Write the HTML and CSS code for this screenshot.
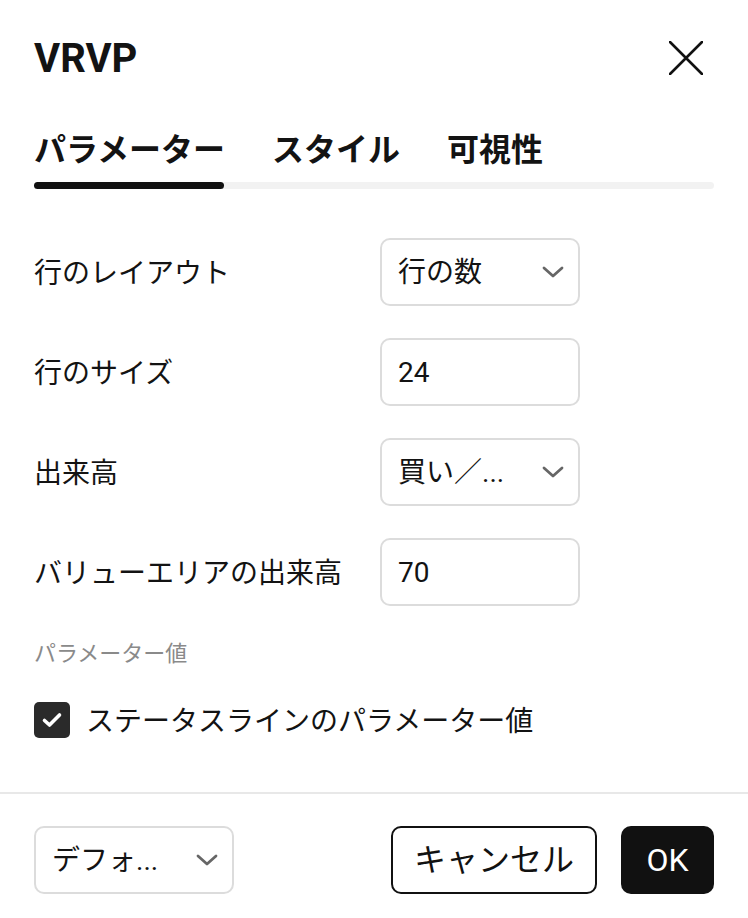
FILE: index.html
```html
<!DOCTYPE html>
<html lang="ja">
<head>
<meta charset="utf-8">
<link rel="stylesheet" href="styles.css">
</head>
<body>
<div class="dialog">
  <div class="header">
    <div class="title">VRVP</div>
    <svg class="close" width="34" height="34" viewBox="0 0 34 34"><path d="M1 1L33 33M33 1L1 33" stroke="#111" stroke-width="2.6" stroke-linecap="round" fill="none"/></svg>
  </div>
  <div class="tabs">
    <div class="tab">パラメーター</div>
    <div class="tab">スタイル</div>
    <div class="tab">可視性</div>
  </div>
  <div class="track"><div class="thumb"></div></div>

  <div class="form">
    <div class="row">
      <div class="label">行のレイアウト</div>
      <div class="field select"><span class="value">行の数</span><svg class="chev" width="22" height="12" viewBox="0 0 22 12"><path d="M2 2L11 10L20 2" stroke="#666" stroke-width="2.8" fill="none" stroke-linecap="round" stroke-linejoin="round"/></svg></div>
    </div>
    <div class="row">
      <div class="label">行のサイズ</div>
      <div class="field"><span class="value">24</span></div>
    </div>
    <div class="row">
      <div class="label">出来高</div>
      <div class="field select"><span class="value">買い／...</span><svg class="chev" width="22" height="12" viewBox="0 0 22 12"><path d="M2 2L11 10L20 2" stroke="#666" stroke-width="2.8" fill="none" stroke-linecap="round" stroke-linejoin="round"/></svg></div>
    </div>
    <div class="row">
      <div class="label">バリューエリアの出来高</div>
      <div class="field"><span class="value">70</span></div>
    </div>
  </div>

  <div class="section-label">パラメーター値</div>
  <div class="check-row">
    <span class="checkbox"><svg width="26" height="26" viewBox="0 0 26 26"><path d="M5.5 13.5L10.5 18L20.5 8" stroke="#fff" stroke-width="3.6" fill="none" stroke-linecap="round" stroke-linejoin="round"/></svg></span>
    <span class="check-label">ステータスラインのパラメーター値</span>
  </div>

  <div class="divider"></div>

  <div class="footer">
    <div class="field select small"><span class="value">デフォ...</span><svg class="chev" width="22" height="12" viewBox="0 0 22 12"><path d="M2 2L11 10L20 2" stroke="#666" stroke-width="2.8" fill="none" stroke-linecap="round" stroke-linejoin="round"/></svg></div>
    <div class="buttons">
      <button class="btn cancel">キャンセル</button>
      <button class="btn ok">OK</button>
    </div>
  </div>
</div>
</body>
</html>
```
FILE: styles.css
```css
html, body {
  margin: 0;
  padding: 0;
  background: #fff;
}
body {
  font-family: Roboto, "Noto Sans CJK JP", sans-serif;
  color: #131313;
}
.dialog {
  width: 748px;
  height: 918px;
  overflow: hidden;
}
.header {
  height: 116px;
  padding: 0 45px 0 34px;
  display: flex;
  align-items: center;
  justify-content: space-between;
}
.title {
  font-size: 40px;
  font-weight: 700;
  line-height: 1;
  padding-top: 2px;
}
.close {
  display: block;
}
.tabs {
  display: flex;
  gap: 47px;
  padding: 14px 34px 0;
}
.tab {
  font-size: 32px;
  font-weight: 700;
  line-height: 40px;
}
.track {
  margin: 12px 34px 0;
  height: 7px;
  border-radius: 4px;
  background: #f2f2f2;
}
.thumb {
  width: 190px;
  height: 7px;
  border-radius: 4px;
  background: #111;
}
.form {
  padding: 49px 34px 0;
  display: flex;
  flex-direction: column;
  gap: 32px;
}
.row {
  display: flex;
  align-items: center;
  height: 68px;
}
.label {
  width: 346px;
  font-size: 28px;
  line-height: 40px;
  padding-top: 3px;
}
.field {
  box-sizing: border-box;
  width: 200px;
  height: 68px;
  border: 2px solid #dcdcdc;
  border-radius: 10px;
  display: flex;
  align-items: center;
  justify-content: space-between;
  padding: 0 14px 0 16px;
}
.value {
  font-size: 28px;
  line-height: 40px;
  padding-top: 2px;
}
.chev {
  display: block;
}
.section-label {
  padding: 33px 34px 0;
  font-size: 22px;
  line-height: 30px;
  color: #8a8a8a;
}
.check-row {
  display: flex;
  align-items: center;
  gap: 16px;
  height: 36px;
  margin: 33px 34px 0;
}
.checkbox {
  width: 36px;
  height: 36px;
  border-radius: 5px;
  background: #2a2a2a;
  display: flex;
  align-items: center;
  justify-content: center;
}
.checkbox svg {
  display: block;
}
.check-label {
  font-size: 28px;
  line-height: 36px;
  padding-top: 4px;
}
.divider {
  margin-top: 54px;
  height: 2px;
  background: #e8e8e8;
}
.footer {
  display: flex;
  align-items: center;
  justify-content: space-between;
  padding: 32px 34px 0;
}
.buttons {
  display: flex;
  gap: 24px;
}
.btn {
  box-sizing: border-box;
  height: 68px;
  border-radius: 10px;
  font-family: Roboto, "Noto Sans CJK JP", sans-serif;
  font-size: 32px;
  line-height: 40px;
  padding: 0;
  cursor: pointer;
}
.cancel {
  width: 206px;
  background: #fff;
  border: 2px solid #111;
  color: #111;
}
.ok {
  width: 93px;
  background: #111;
  border: none;
  color: #fff;
}
```
